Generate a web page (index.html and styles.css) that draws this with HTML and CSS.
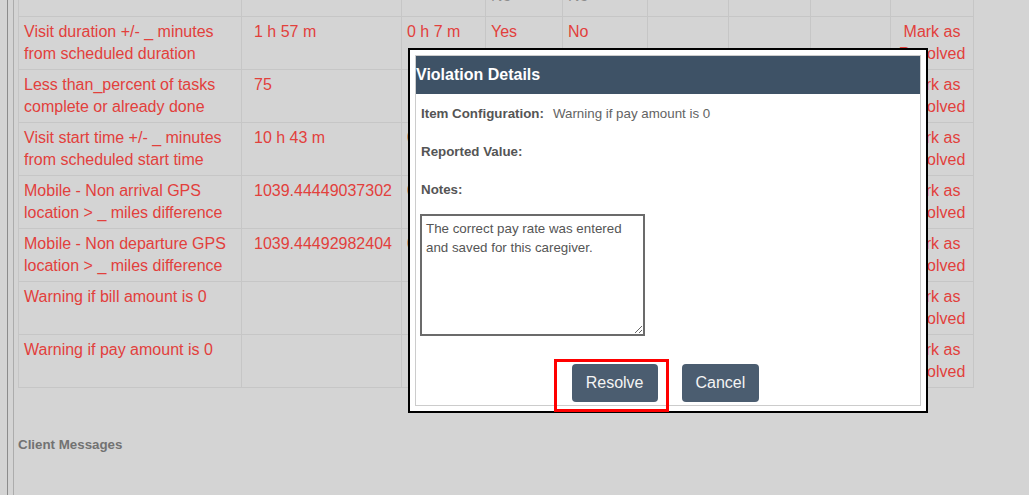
FILE: index.html
```html
<!DOCTYPE html>
<html lang="en">
<head>
    <meta charset="UTF-8">
    <meta name="viewport" content="width=device-width, initial-scale=1.0">
    <title>Visit Violations</title>
    <link rel="stylesheet" href="styles.css">
</head>
<body>
    <div class="frame">
        <div class="content">
            <table class="violations">
                <colgroup>
                    <col><col><col><col><col><col><col><col><col>
                </colgroup>
                <tr class="head-row">
                    <td></td><td></td><td></td><td>No</td><td>No</td><td></td><td></td><td></td><td></td>
                </tr>
                <tr>
                    <td>Visit duration +/- _ minutes from scheduled duration</td>
                    <td class="value">1 h 57 m</td>
                    <td>0 h 7 m</td>
                    <td>Yes</td>
                    <td>No</td>
                    <td></td><td></td><td></td>
                    <td class="action">Mark as Resolved</td>
                </tr>
                <tr>
                    <td>Less than_percent of tasks complete or already done</td>
                    <td class="value">75</td>
                    <td></td>
                    <td></td>
                    <td></td>
                    <td></td><td></td><td></td>
                    <td class="action">Mark as Resolved</td>
                </tr>
                <tr>
                    <td>Visit start time +/- _ minutes from scheduled start time</td>
                    <td class="value">10 h 43 m</td>
                    <td>0 h 15 m</td>
                    <td></td>
                    <td></td>
                    <td></td><td></td><td></td>
                    <td class="action">Mark as Resolved</td>
                </tr>
                <tr>
                    <td>Mobile - Non arrival GPS location &gt; _ miles difference</td>
                    <td class="value">1039.44449037302</td>
                    <td>0.5</td>
                    <td></td>
                    <td></td>
                    <td></td><td></td><td></td>
                    <td class="action">Mark as Resolved</td>
                </tr>
                <tr>
                    <td>Mobile - Non departure GPS location &gt; _ miles difference</td>
                    <td class="value">1039.44492982404</td>
                    <td>0.5</td>
                    <td></td>
                    <td></td>
                    <td></td><td></td><td></td>
                    <td class="action">Mark as Resolved</td>
                </tr>
                <tr>
                    <td>Warning if bill amount is 0</td>
                    <td class="value"></td>
                    <td></td>
                    <td></td>
                    <td></td>
                    <td></td><td></td><td></td>
                    <td class="action">Mark as Resolved</td>
                </tr>
                <tr>
                    <td>Warning if pay amount is 0</td>
                    <td class="value"></td>
                    <td></td>
                    <td></td>
                    <td></td>
                    <td></td><td></td><td></td>
                    <td class="action">Mark as Resolved</td>
                </tr>
            </table>

            <h4 class="section-title">Client Messages</h4>
        </div>
    </div>

    <div class="modal">
        <div class="modal-panel">
            <div class="modal-header">Violation Details</div>
            <div class="field">
                <span class="field-label">Item Configuration:</span>
                <span class="field-value">Warning if pay amount is 0</span>
            </div>
            <div class="field">
                <span class="field-label">Reported Value:</span>
            </div>
            <div class="field">
                <span class="field-label">Notes:</span>
            </div>
            <textarea class="notes">The correct pay rate was entered and saved for this caregiver.</textarea>
            <div class="modal-actions">
                <div class="resolve-wrap">
                    <button class="btn">Resolve</button>
                </div>
                <button class="btn">Cancel</button>
            </div>
        </div>
    </div>
</body>
</html>
```

FILE: styles.css
```css
body {
    margin: 0;
    background: #d4d4d4;
    font-family: Arial, "Liberation Sans", sans-serif;
    overflow: hidden;
}

.frame {
    margin-left: 7px;
    border-left: 1px solid #8c8c8c;
    min-height: 100vh;
}

.content {
    display: flow-root;
    margin-left: 5px;
    padding-left: 4px;
    border-left: 1px solid #acacac;
    min-height: 100vh;
}

.violations {
    margin-top: -42px;
    border-collapse: collapse;
    table-layout: fixed;
    width: 956px;
    font-size: 16px;
    line-height: 22px;
    color: #e2403c;
}

.violations col:nth-child(1) { width: 223px; }
.violations col:nth-child(2) { width: 160px; }
.violations col:nth-child(3) { width: 84px; }
.violations col:nth-child(4) { width: 77px; }
.violations col:nth-child(5) { width: 85px; }
.violations col:nth-child(6) { width: 81px; }
.violations col:nth-child(7) { width: 82px; }
.violations col:nth-child(8) { width: 80px; }
.violations col:nth-child(9) { width: 83px; }

.violations td {
    border: 1px solid #c6c6c6;
    padding: 4px 5px;
    height: 44px;
    vertical-align: top;
}

.violations .value {
    padding-left: 12px;
}

.violations .action {
    text-align: center;
}

.head-row td {
    vertical-align: bottom;
    padding-bottom: 9px;
    color: #8e8e8e;
}

.section-title {
    margin: 49px 0 0;
    font-size: 13.33px;
    color: #727272;
}

.modal {
    position: fixed;
    left: 408px;
    top: 48px;
    width: 520px;
    height: 365px;
    box-sizing: border-box;
    padding: 5px;
    background: #fff;
    border: 2px solid #000;
}

.modal-panel {
    height: 100%;
    box-sizing: border-box;
    border: 1px solid #ccc;
    display: flex;
    flex-direction: column;
}

.modal-header {
    height: 38px;
    line-height: 38px;
    background: #3e5266;
    color: #fff;
    font-size: 16px;
    font-weight: bold;
}

.field {
    height: 38px;
    display: flex;
    align-items: center;
    padding-left: 5px;
    font-size: 13.33px;
    color: #555;
}

.field-label {
    font-weight: bold;
    margin-right: 9px;
}

.field-value {
    color: #636363;
}

.notes {
    align-self: flex-start;
    margin: 6px 0 0 4px;
    width: 225px;
    height: 122px;
    box-sizing: border-box;
    padding: 3px 4px;
    border: 2px solid #6b6b6b;
    border-radius: 0;
    outline: none;
    font-family: Arial, "Liberation Sans", sans-serif;
    font-size: 13.33px;
    line-height: 19px;
    color: #555;
}

.modal-actions {
    margin-top: 28px;
    padding-right: 5px;
    display: flex;
    justify-content: center;
    gap: 24px;
}

.btn {
    height: 38px;
    padding: 0 14px;
    border: none;
    border-radius: 4px;
    background: #4b5d70;
    color: #f4f4f4;
    font-family: Arial, "Liberation Sans", sans-serif;
    font-size: 16px;
    cursor: pointer;
}

.resolve-wrap {
    position: relative;
    display: flex;
}

.resolve-wrap::after {
    content: "";
    position: absolute;
    left: -18px;
    top: -5px;
    right: -11px;
    bottom: -10px;
    border: 3px solid #ff0000;
}
```
